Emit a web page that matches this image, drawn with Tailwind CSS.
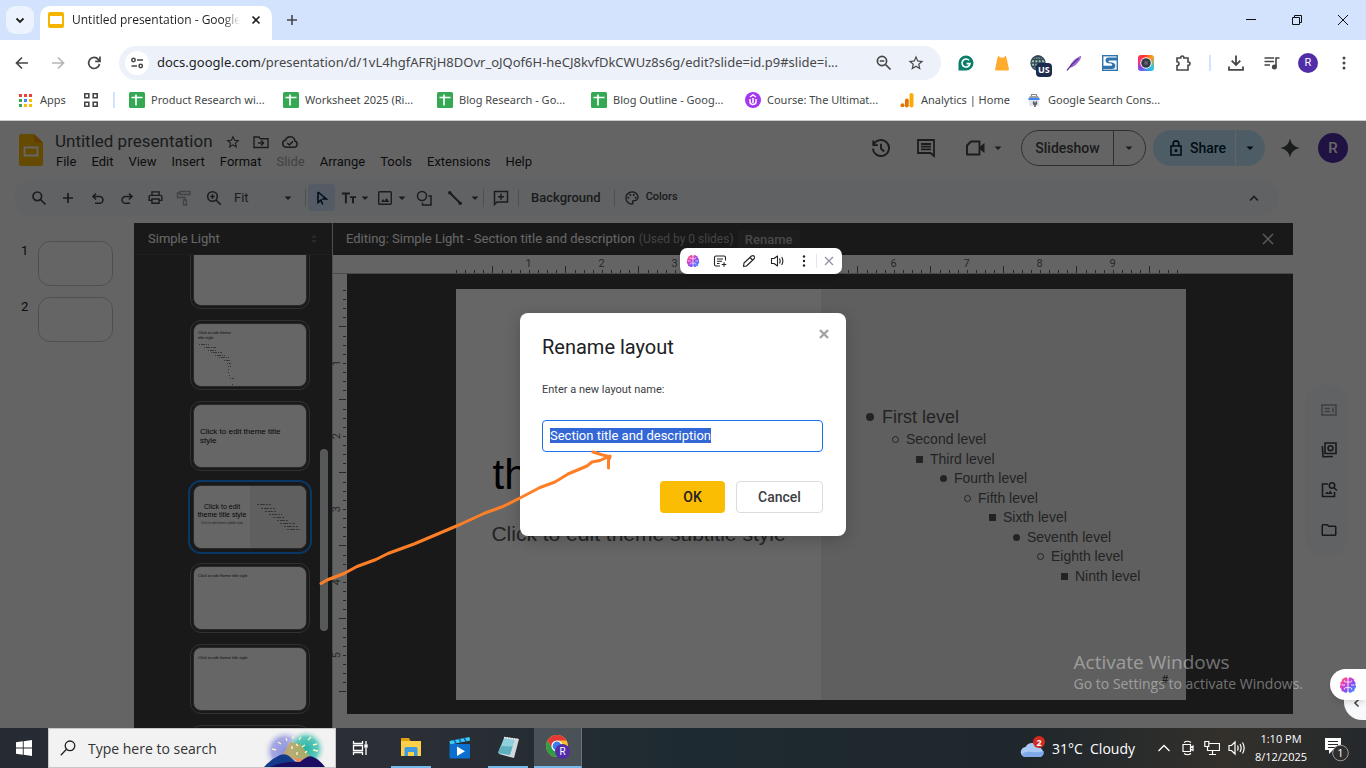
<!DOCTYPE html>
<html lang="en">
<head>
<meta charset="utf-8">
<title>Untitled presentation - Google Slides</title>
<script src="https://cdn.jsdelivr.net/npm/@tailwindcss/browser@4"></script>
</head>
<body class="flex h-screen flex-col overflow-hidden bg-white font-['Open_Sans',sans-serif] text-[#1f1f1f]">

<svg class="absolute size-0" aria-hidden="true">
  <defs>
    <linearGradient id="brainFill" x1="0" y1="0" x2="1" y2="1">
      <stop offset="0" stop-color="#ff7a45"/><stop offset=".3" stop-color="#e83fb8"/><stop offset=".6" stop-color="#8a4df5"/><stop offset="1" stop-color="#1fb0ff"/>
    </linearGradient>
    <symbol id="brain" viewBox="0 0 24 24">
      <path fill="url(#brainFill)" d="M11.4 3.2C10.6 1.4 7.8 1.2 6.8 3 4.600 3 3.300 5 3.900 6.700 1.800 7.700 1.300 10 2.300 11.600 .7 13.200 1 16 3 17c-.2 2.300 1.400 4 3.500 4 1 2 4.200 2 4.900-.2zM12.600 3.200c.8-1.800 3.600-2 4.600-.2 2.200 0 3.500 2 2.900 3.700 2.100 1 2.600 3.300 1.600 4.900 1.600 1.600 1.300 4.400-.7 5.400.2 2.300-1.400 4-3.500 4-1 2-4.200 2-4.900-.2z"/>
      <path fill="none" stroke="#fff" stroke-width="1.100" stroke-linecap="round" d="M11.400 8H8.500a1.500 1.500 0 0 1-1.500-2M11.400 15.500H9a2 2 0 0 0-2 2M4 12h3.500M12.600 8h2.900A1.500 1.500 0 0 0 17 6.500M12.600 15.500H15a2 2 0 0 1 2 2M20 12h-3.500"/>
    </symbol>
    <symbol id="sheet" viewBox="0 0 16 16">
      <rect width="16" height="16" rx="1.500" fill="#34a853"/><path d="M7 2.500v11M2.500 5.500h11" stroke="#fff" stroke-width="1.700"/>
    </symbol>
    <symbol id="caret" viewBox="0 0 10 10"><path fill="currentColor" d="M1.500 3.500h7L5 7z"/></symbol>
    <symbol id="star" viewBox="0 0 24 24"><path fill="currentColor" d="M22 9.240l-7.190-.62L12 2 9.190 8.630 2 9.240l5.460 4.730L5.820 21 12 17.270 18.180 21l-1.630-7.030L22 9.240zM12 15.400l-3.760 2.270 1-4.280-3.320-2.880 4.380-.38L12 6.100l1.710 4.040 4.380.38-3.320 2.880 1 4.280L12 15.400z"/></symbol>
    <pattern id="ticksX" width="73" height="8" patternUnits="userSpaceOnUse">
      <path stroke="#5f6368" d="M.5 5v3M9.500 5v3M18.500 5v3M27.500 5v3M36.500 1v7M46.500 5v3M55.500 5v3M64.500 5v3"/>
    </pattern>
    <pattern id="ticksY" width="8" height="73" patternUnits="userSpaceOnUse">
      <path stroke="#5f6368" d="M5 .5h3M5 9.500h3M5 18.500h3M5 27.500h3M1 36.500h7M5 46.500h3M5 55.500h3M5 64.500h3"/>
    </pattern>
  </defs>
</svg>

<!-- Tab strip -->
<header class="flex h-10 shrink-0 items-end bg-[#d3e3fd]">
  <button aria-label="Search tabs" class="mb-[6px] ml-[6px] flex size-7 items-center justify-center rounded-[9px] bg-[#edf3fe]">
    <svg class="size-4" viewBox="0 0 16 16" fill="none" stroke="#1f1f1f" stroke-width="1.800"><path d="M4.500 6.500 8 10l3.500-3.500"/></svg>
  </button>
  <div class="ml-[6px] flex h-[34px] w-[232px] items-center rounded-t-[10px] bg-white pr-2 pb-[6px] pl-2">
    <svg class="size-4" viewBox="0 0 16 16"><rect width="16" height="16" rx="2" fill="#f5b400"/><rect x="2" y="4" width="12" height="8" fill="#fff"/></svg>
    <span class="ml-2 w-[168px] overflow-hidden text-[12px] whitespace-nowrap [mask-image:linear-gradient(to_right,#000_90%,transparent)]">Untitled presentation - Google</span>
    <button aria-label="Close tab" class="ml-auto"><svg class="size-4" viewBox="0 0 16 16" stroke="#1f1f1f" stroke-width="1.600"><path d="m4.500 4.500 7 7m0-7-7 7"/></svg></button>
  </div>
  <button aria-label="New tab" class="mb-3 ml-3"><svg class="size-4" viewBox="0 0 16 16" stroke="#444746" stroke-width="1.600"><path d="M8 3v10M3 8h10"/></svg></button>
  <div class="mr-[14px] mb-3 ml-auto flex items-center gap-[30px]">
    <button aria-label="Minimize"><svg class="size-4" viewBox="0 0 16 16" stroke="#111"><path d="M3 7.500h10"/></svg></button>
    <button aria-label="Restore"><svg class="size-4" viewBox="0 0 16 16" fill="none" stroke="#111"><path d="M3.500 5.500h7v7h-7zM5.500 5.500v-2h7v7h-2"/></svg></button>
    <button aria-label="Close window" class="mr-px"><svg class="size-4" viewBox="0 0 16 16" stroke="#111"><path d="m3 3 10 10M13 3 3 13"/></svg></button>
  </div>
</header>

<!-- Address bar -->
<div class="flex h-[46px] shrink-0 items-center bg-white pr-3 pl-[13px] text-[#444746]">
  <button aria-label="Back" class="mr-[18px]"><svg class="size-[18px]" viewBox="0 0 18 18" fill="none" stroke="#444746" stroke-width="1.700"><path d="M15 9H4M9 3.500 3.500 9 9 14.500"/></svg></button>
  <button aria-label="Forward" class="mr-[18px]"><svg class="size-[18px]" viewBox="0 0 18 18" fill="none" stroke="#b4b6b8" stroke-width="1.700"><path d="M3 9h11M9 3.500 14.500 9 9 14.500"/></svg></button>
  <button aria-label="Reload"><svg class="size-[18px]" viewBox="0 0 18 18" fill="none" stroke="#444746" stroke-width="1.700"><path d="M14.500 10a5.500 5.500 0 1 1-1.200-4.600L15 7.200M15 2.500v4.800h-4.800"/></svg></button>
  <div class="ml-4 flex h-[34px] min-w-0 flex-1 items-center rounded-full bg-[#ecf1fa] pr-4 pl-[6px]">
    <button aria-label="Site information" class="flex size-6 shrink-0 items-center justify-center rounded-full bg-white">
      <svg class="size-4" viewBox="0 0 16 16" fill="none" stroke="#444746" stroke-width="1.500"><circle cx="4.500" cy="5" r="1.700"/><path d="M8 5h6M2.500 11H8"/><circle cx="11.700" cy="11" r="1.700"/></svg>
    </button>
    <a href="#" class="ml-2 overflow-hidden font-['Noto_Sans',sans-serif] text-[13px] whitespace-nowrap text-[#474747]"><span class="text-[#1f1f1f]">docs.google.com</span>/presentation/d/1vL4hgfAFRjH8DOvr_oJQof6H-heCJ8kvfDkCWUz8s6g/edit?slide=id.p9#slide=i...</a>
    <button aria-label="Zoom" class="mr-[14px] ml-auto"><svg class="size-[18px]" viewBox="0 0 18 18" fill="none" stroke="#444746" stroke-width="1.700"><circle cx="7" cy="7" r="4.600"/><path d="m10.500 10.500 5 5M4.800 7h4.400"/></svg></button>
    <button aria-label="Bookmark this tab"><svg class="size-[18px]"><use href="#star"/></svg></button>
  </div>
  <div class="ml-[17px] flex items-center gap-5">
    <button aria-label="Grammar extension"><svg class="size-4" viewBox="0 0 16 16"><path fill="#0b7d69" d="M8 .5A7.500 7.500 0 1 1 8 15.500H.5V8A7.500 7.500 0 0 1 8 .5z"/><path d="M11 5.300A4 4 0 1 0 12 8.600H8.600" fill="none" stroke="#fff" stroke-width="1.600"/></svg></button>
    <button aria-label="Notes extension"><svg class="size-4" viewBox="0 0 16 16"><path fill="#ffab2e" d="M4.200.5 6 2.500h4L11.800.5 13 5l2 9.500q0 1-1 1H2q-1 0-1-1L3 5z"/></svg></button>
    <button aria-label="Location extension, US" class="relative"><svg class="size-4" viewBox="0 0 16 16" fill="none" stroke="#33465a" stroke-width="1.300"><circle cx="8" cy="8" r="7" fill="#9cc7a8"/><path d="M1 8h14M2 4.500h12M2 11.500h12M8 1v14"/><ellipse cx="8" cy="8" rx="3.500" ry="7"/></svg><span class="absolute top-[8px] left-[6px] rounded-[4px] bg-[#1d2c4c] px-[2px] text-[9px] leading-[14px] font-bold text-white">US</span></button>
    <button aria-label="Feather extension"><svg class="size-4" viewBox="0 0 16 16"><path fill="#9b6fd0" d="M15 .8c.6 3-2.700 7-6 9.700-2 1.700-4.200 2-5.500 2.200C4.500 8 9 3 15 .8z"/><path stroke="#5b2a9a" stroke-width="1.100" fill="none" d="M12.500 3.500Q6 8.500 1 15.300"/></svg></button>
    <button aria-label="SEO extension"><svg class="size-4" viewBox="0 0 16 16"><rect x=".7" y=".7" width="14.600" height="14.600" fill="#fff" stroke="#2f74ad" stroke-width="1.400"/><path fill="#2f74ad" d="M15 2.500H6.500C2.500 2.500 2.500 8 6.500 8.300l2.500.3c1.800.2 1.800 2.200-.2 2.200H1V14h9.200c4.300-.2 4.300-6 0-6.500L7.500 7.200C6.200 7 6.200 5.400 7.500 5.400H15z"/></svg></button>
    <button aria-label="Color picker extension" class="flex size-4 items-center justify-center rounded-[3px] bg-[conic-gradient(from_45deg,#ff9a1f,#22c7ee_25%,#7b4df0_50%,#ff2d8e_65%,#ff3a24_85%,#ff9a1f)]"><svg class="size-3" viewBox="0 0 12 12"><circle cx="6" cy="6" r="5.700" fill="#fff"/><circle cx="6" cy="6" r="4.800" fill="#343a46"/><circle cx="6" cy="6" r="2" fill="#5c6470"/></svg></button>
    <button aria-label="Extensions"><svg class="size-[18px]" viewBox="0 0 18 18" fill="none" stroke="#444746" stroke-width="1.600"><path d="M3 4h3.700q0-2 1.600-2t1.600 2H14v4q2 0 2 1.600T14 11.200V16H3v-4.200q2-.2 2-2t-2-2z"/></svg></button>
  </div>
  <span class="mx-[17px] h-4 w-[2px] bg-[#d3e3fd]"></span>
  <button aria-label="Downloads" class="mr-5"><svg class="size-4" viewBox="0 0 16 16" fill="none" stroke="#444746" stroke-width="1.800"><path d="M8 .5v9M3.700 5.700 8 10l4.300-4.300M1 11.500v3.400h14v-3.400"/></svg></button>
  <button aria-label="Media controls" class="mr-[18px]"><svg class="size-4" viewBox="0 0 16 16" fill="none" stroke="#444746" stroke-width="1.600"><path d="M.5 3H10M.5 6.500H10M.5 10H6M12 12V3h3.500"/><circle cx="10.400" cy="12" r="1.700" fill="#444746"/></svg></button>
  <button aria-label="Profile" class="mr-4 flex size-5 items-center justify-center rounded-full bg-[#512da8] font-['Roboto',sans-serif] text-[11px] text-white">R</button>
  <button aria-label="Menu" class="flex w-5 justify-center"><svg class="h-4 w-1" viewBox="0 0 4 16" fill="#444746"><circle cx="2" cy="3" r="1.500"/><circle cx="2" cy="8" r="1.500"/><circle cx="2" cy="13" r="1.500"/></svg></button>
</div>

<!-- Bookmarks -->
<nav class="flex h-[35px] shrink-0 items-center border-b border-[#c9ccd0] bg-white pb-[6px] pl-[19px] font-['Noto_Sans',sans-serif] text-[11px] whitespace-nowrap text-[#444746]">
  <a href="#" class="flex w-[65px] items-center gap-2"><svg class="size-[13px]" viewBox="0 0 13 13"><path fill="#ea4335" d="M0 0h3v3H0zM5 0h3v3H5zM10 0h3v3h-3z"/><path fill="#34a853" d="M0 5h3v3H0zM0 10h3v3H0z"/><path fill="#4285f4" d="M5 5h3v3H5z"/><path fill="#fbbc04" d="M10 5h3v3h-3zM5 10h3v3H5zM10 10h3v3h-3z"/></svg>Apps</a>
  <a href="#" aria-label="Tab groups"><svg class="size-[14px]" viewBox="0 0 14 14" fill="none" stroke="#444746" stroke-width="1.600"><path d="M.8.8h4v4h-4zM9.200.8h4v4h-4zM.8 9.200h4v4h-4zM9.200 9.200h4v4h-4z"/></svg></a>
  <span class="mr-[14px] ml-[15px] h-4 w-[2px] bg-[#d3e3fd]"></span>
  <a href="#" class="flex w-[154px] items-center gap-[6px]"><svg class="size-4"><use href="#sheet"/></svg>Product Research wi...</a>
  <a href="#" class="flex w-[154px] items-center gap-[6px]"><svg class="size-4"><use href="#sheet"/></svg>Worksheet 2025 (Ri...</a>
  <a href="#" class="flex w-[154px] items-center gap-[6px]"><svg class="size-4"><use href="#sheet"/></svg>Blog Research - Go...</a>
  <a href="#" class="flex w-[154px] items-center gap-[6px]"><svg class="size-4"><use href="#sheet"/></svg>Blog Outline - Goog...</a>
  <a href="#" class="flex w-[154px] items-center gap-[6px]"><svg class="size-4" viewBox="0 0 16 16"><circle cx="8" cy="8" r="8" fill="#a435f0"/><path d="M5 7v2.500a3 3 0 0 0 6 0V7M8 11V6M5 5l3-2 3 2" fill="none" stroke="#fff" stroke-width="1.500"/></svg>Course: The Ultimat...</a>
  <a href="#" class="flex w-[127px] items-center gap-[6px]"><svg class="size-4" viewBox="0 0 16 16"><circle cx="3.500" cy="13.300" r="2" fill="#e37400"/><rect x="6" y="6.500" width="3.700" height="9" rx="1.800" fill="#e37400"/><rect x="10.500" y="1" width="4" height="14.500" rx="2" fill="#fbab04"/></svg>Analytics | Home</a>
  <a href="#" class="flex items-center gap-[6px]"><svg class="size-4" viewBox="0 0 16 16"><path d="M5.500 4V2.500h5V4" fill="none" stroke="#888" stroke-width="1.200"/><path fill="#9aa0a6" d="M4 4h8l1.500 2.500h-11z"/><path fill="#4285f4" d="M2.500 6h11v2.200h-11z"/><path fill="#e3e6ea" d="M3 8.200h10V14H3z"/><circle cx="9" cy="11" r="2.300" fill="#5f6368"/><path fill="#e3e6ea" d="M8.300 8h1.400v2.500H8.300z"/><path stroke="#5f6368" stroke-width="1.600" d="M9 11.500V15"/></svg>Google Search Cons...</a>
</nav>

<!-- Slides application -->
<main class="relative flex min-h-0 flex-1 flex-col bg-[#f9fbfd] font-['Roboto',sans-serif]">
  <div class="flex h-[58px] shrink-0 items-start pr-[18px] pl-[19px]">
    <svg class="mt-[13px] h-8 w-6" viewBox="0 0 24 32"><path fill="#fbbc04" d="M2.500 0H15l9 8.500v21q0 2.500-2.500 2.500h-19Q0 32 0 29.500v-27Q0 0 2.500 0z"/><path fill="#f29900" d="M15 0l9 8.500h-9z"/><path fill="none" stroke="#fff" stroke-width="1.800" d="M5.500 13.500h13v8h-13z"/></svg>
    <div class="mt-[9px] ml-3">
      <div class="flex h-6 items-center text-[#444746]">
        <h1 class="text-[17px]">Untitled presentation</h1>
        <button aria-label="Star" class="ml-3"><svg class="size-4"><use href="#star"/></svg></button>
        <button aria-label="Move" class="ml-3"><svg class="size-4" viewBox="0 0 16 16" fill="none" stroke="#444746" stroke-width="1.400"><path d="M1 3h5l1.500 1.700H15V13.500H1zM5 9h5M8.200 6.600 10.600 9l-2.400 2.400"/></svg></button>
        <button aria-label="Saved to Drive" class="ml-3"><svg class="size-[18px]" viewBox="0 0 18 18" fill="none" stroke="#444746" stroke-width="1.500"><path d="M5 14.200a3.600 3.600 0 0 1-.4-7.100 4.800 4.800 0 0 1 9.300.9 3.200 3.200 0 0 1-.3 6.200zM6.300 10l2 2 3.600-3.600"/></svg></button>
      </div>
      <nav class="ml-px flex h-4 items-center gap-[15px] text-[13px]">
        <button>File</button><button>Edit</button><button>View</button><button>Insert</button><button>Format</button><button disabled class="text-[#a0a2a4]">Slide</button><button>Arrange</button><button>Tools</button><button>Extensions</button><button>Help</button>
      </nav>
    </div>
    <div class="mt-[9px] ml-auto flex h-9 items-center text-[14px] font-medium text-[#444746]">
      <button aria-label="Version history" class="mr-[25px]"><svg class="size-5" viewBox="0 0 20 20" fill="none" stroke="#444746" stroke-width="1.900"><path d="M2.800 6.500A8 8 0 1 1 2 10.500M2.300 2.500v4.600h4.600M10 5.800V10.500l3.300 3"/></svg></button>
      <button aria-label="Comments" class="mr-[29px]"><svg class="size-5" viewBox="0 0 20 20" fill="none" stroke="#444746" stroke-width="1.800"><path d="M2 2h16v16l-3.500-3H2zM5 6h10M5 8.700h10M5 11.400h10"/></svg></button>
      <button aria-label="Join a call" class="mr-[18px] flex items-center gap-2"><svg class="size-5" viewBox="0 0 20 20"><path fill="none" stroke="#444746" stroke-width="1.900" d="M6 3.500h8.500v13H2v-9z" stroke-linejoin="round"/><path fill="#444746" d="M14.500 9 19.500 5v10l-5-4z"/></svg><svg class="size-[10px]"><use href="#caret"/></svg></button>
      <div class="mr-[7px] flex h-9 w-[125px] rounded-full border border-[#747775]">
        <button class="flex-1">Slideshow</button>
        <button aria-label="Slideshow options" class="flex w-8 items-center justify-center border-l border-[#747775] pr-[2px]"><svg class="size-[10px]"><use href="#caret"/></svg></button>
      </div>
      <div class="mr-[15px] flex h-9 w-[112px] rounded-full bg-[#c2e7ff] text-[#001d35]">
        <button class="flex flex-1 items-center justify-center gap-2 pl-2"><svg class="h-4 w-3" viewBox="0 0 12 16" fill="none" stroke="#001d35" stroke-width="1.600"><path d="M1 6h10v9H1zM3.200 6V3.700a2.800 2.800 0 0 1 5.600 0V6"/><circle cx="6" cy="10.500" r=".8"/></svg>Share</button>
        <button aria-label="Share options" class="flex w-[30px] items-center justify-center border-l border-[#f9fbfd] pr-[2px]"><svg class="size-[10px]"><use href="#caret"/></svg></button>
      </div>
      <button aria-label="Ask Gemini" class="mr-[18px]"><svg class="size-5" viewBox="0 0 20 20"><path fill="#444746" d="M10 .5Q11.500 8.500 19.500 10 11.500 11.500 10 19.500 8.500 11.500 .5 10 8.500 8.500 10 .5z"/></svg></button>
      <button aria-label="Account" class="flex size-[30px] items-center justify-center rounded-full bg-[#512da8] text-[15px] text-white">R</button>
    </div>
  </div>

  <div class="mr-[87px] ml-[14px] flex h-[37px] shrink-0 items-center rounded-full bg-[#f0f4f9] pl-[10px] text-[13px] text-[#444746]">
    <button aria-label="Search menus" class="flex w-[29px] justify-center"><svg class="size-4" viewBox="0 0 16 16" fill="none" stroke="#444746" stroke-width="1.700"><circle cx="6.300" cy="6.300" r="4.300"/><path d="m9.500 9.500 5 5"/></svg></button>
    <button aria-label="New slide" class="flex w-[30px] justify-center"><svg class="size-4" viewBox="0 0 16 16" stroke="#444746" stroke-width="1.700"><path d="M8 3v10M3 8h10"/></svg></button>
    <button aria-label="Undo" class="flex w-[30px] justify-center"><svg class="size-4" viewBox="0 0 16 16" fill="none" stroke="#444746" stroke-width="1.600"><path d="M6 3.500 3 6.500l3 3M3 6.500h6.500a3.400 3.400 0 0 1 0 6.800H5"/></svg></button>
    <button aria-label="Redo" class="flex w-[28px] justify-center"><svg class="size-4" viewBox="0 0 16 16" fill="none" stroke="#444746" stroke-width="1.600"><path d="m10 3.500 3 3-3 3M13 6.500H6.500a3.400 3.400 0 0 0 0 6.800H11"/></svg></button>
    <button aria-label="Print" class="flex w-[29px] justify-center"><svg class="size-[17px]" viewBox="0 0 24 24" fill="#444746"><path d="M19 8h-1V3H6v5H5c-1.660 0-3 1.340-3 3v6h4v4h12v-4h4v-6c0-1.660-1.340-3-3-3zM8 5h8v3H8V5zm8 12v2H8v-4h8v2zm2-2v-2H6v2H4v-4c0-.55.45-1 1-1h14c.55 0 1 .45 1 1v4h-2z"/></svg></button>
    <button aria-label="Paint format" disabled class="flex w-[28px] justify-center"><svg class="size-4" viewBox="0 0 16 16" fill="none" stroke="#a6a8aa" stroke-width="1.400"><path d="M4 1.500h10v3H4zM4 3H1.500v4.500H9V10M7.500 10h3v5h-3z"/></svg></button>
    <button aria-label="Zoom in" class="flex w-[31px] justify-center"><svg class="size-4" viewBox="0 0 16 16" fill="none" stroke="#444746" stroke-width="1.600"><circle cx="6.500" cy="6.500" r="4.800"/><path d="m10 10 4.800 4.800M6.500 4.300v4.400M4.300 6.500h4.400"/></svg></button>
    <button class="flex w-[64px] items-center justify-between pl-[5px]">Fit<svg class="size-[10px]"><use href="#caret"/></svg></button>
    <span class="mr-[2px] ml-3 h-[18px] w-px bg-[#c7c7c7]"></span>
    <button aria-label="Select" class="flex size-[27px] items-center justify-center rounded-[4px] bg-[#d3e3fd]"><svg class="size-4" viewBox="0 0 16 16" fill="none" stroke="#041e49" stroke-width="1.600"><path d="M4 2v10.500l2.800-2.400 2 4.400M4 2l8.300 7H8"/></svg></button>
    <button aria-label="Text box" class="flex w-[35px] items-center justify-end gap-[3px]"><svg class="h-4 w-[16px]" viewBox="0 0 18 16" fill="none" stroke="#444746" stroke-width="2.200"><path d="M1 3h9M5.500 3v11M10 7h7M13.500 7v7"/></svg><svg class="size-[10px]"><use href="#caret"/></svg></button>
    <button aria-label="Image" class="flex w-[37px] items-center justify-end gap-1"><svg class="size-4" viewBox="0 0 16 16"><rect x="1.700" y="1.700" width="12.600" height="12.600" rx="1" fill="none" stroke="#444746" stroke-width="1.400"/><path fill="#444746" d="m4 12 2-3 1.600 2L9.500 8l2.800 4z"/></svg><svg class="size-[10px]"><use href="#caret"/></svg></button>
    <button aria-label="Shape" class="flex w-[34px] justify-center"><svg class="size-4" viewBox="0 0 16 16" fill="none" stroke="#444746" stroke-width="1.500"><circle cx="6" cy="6" r="4.500"/><path d="M12.500 6H15v9H6.500v-2.500"/></svg></button>
    <button aria-label="Line" class="flex w-[39px] items-center justify-end gap-[7px]"><svg class="size-4" viewBox="0 0 16 16"><path stroke="#444746" stroke-width="2" d="m2.500 2.500 11 11"/><circle cx="2.800" cy="2.800" r="1.800" fill="#444746"/><circle cx="13.200" cy="13.200" r="1.800" fill="#444746"/></svg><svg class="size-[10px]"><use href="#caret"/></svg></button>
    <span class="mr-1 ml-[3px] h-[18px] w-px bg-[#c7c7c7]"></span>
    <button aria-label="Comment" class="flex w-[26px] justify-center"><svg class="size-4" viewBox="0 0 16 16" fill="none" stroke="#444746" stroke-width="1.500"><path d="M1.500 14.500v-13h13v10.500H4zM8 3.700v6M5 6.700h6"/></svg></button>
    <span class="mr-3 ml-1 h-[18px] w-px bg-[#c7c7c7]"></span>
    <button class="mr-[13px] font-medium">Background</button>
    <span class="mr-[9px] h-[18px] w-px bg-[#c7c7c7]"></span>
    <button class="flex items-center gap-[6px] text-[11px] font-medium"><svg class="size-4" viewBox="0 0 24 24" fill="#444746"><path d="M12 22C6.490 22 2 17.510 2 12S6.490 2 12 2s10 4.040 10 9c0 3.310-2.690 6-6 6h-1.770c-.28 0-.5.22-.5.5 0 .12.05.23.13.33.41.47.64 1.060.64 1.670A2.500 2.500 0 0 1 12 22zm0-18c-4.410 0-8 3.590-8 8s3.590 8 8 8c.28 0 .5-.22.5-.5a.54.54 0 0 0-.14-.35c-.41-.46-.63-1.050-.63-1.650a2.500 2.500 0 0 1 2.500-2.500H16c2.210 0 4-1.790 4-4 0-3.860-3.590-7-8-7z"/><circle cx="6.500" cy="11.500" r="1.500"/><circle cx="9.500" cy="7.500" r="1.500"/><circle cx="14.500" cy="7.500" r="1.500"/><circle cx="17.500" cy="11.500" r="1.500"/></svg>Colors</button>
    <button aria-label="Hide menus" class="mr-[17px] ml-auto"><svg class="size-4" viewBox="0 0 16 16" fill="none" stroke="#444746" stroke-width="1.700"><path d="M4 10.500 8 6.500l4 4"/></svg></button>
  </div>

  <div class="mt-[7px] flex min-h-0 flex-1">
    <!-- Filmstrip -->
    <aside class="flex w-[134px] shrink-0 flex-col gap-[11px] pt-[18px] pl-[21px] text-[13px] text-[#222]">
      <div class="flex h-[45px] justify-between pr-[21px]"><span>1</span><span class="w-[75px] rounded-[12px] border border-[#c4c7c5] bg-white/50"></span></div>
      <div class="flex h-[45px] justify-between pr-[21px]"><span>2</span><span class="w-[75px] rounded-[12px] border border-[#c4c7c5] bg-white/50"></span></div>
    </aside>

    <!-- Theme layouts -->
    <section class="flex w-[199px] shrink-0 flex-col overflow-hidden border-r border-[#c4c7c5] bg-[#3f3f3f]">
      <div class="flex h-8 shrink-0 items-center justify-between border-b border-[#4d4d4d] pr-[13px] pl-[14px] text-[13px] text-white">Simple Light
        <svg class="size-[10px]" viewBox="0 0 10 10" fill="#666"><path d="M2 4h6L5 .5zM2 6h6L5 9.500z"/></svg>
      </div>
      <div class="relative flex min-h-0 flex-1 flex-col overflow-hidden pl-[56px]">
        <div class="-mt-4 flex flex-col gap-[11px] font-['Liberation_Sans',sans-serif] text-[#222]">
          <div class="h-[70px] w-[120px] shrink-0 rounded-[11px] border border-[#7c7c7c] p-[2px]"><div class="h-full rounded-[8px] border border-[#666] bg-white"></div></div>
          <div class="h-[70px] w-[120px] shrink-0 rounded-[11px] border border-[#7c7c7c] p-[2px]"><div class="h-full overflow-hidden rounded-[8px] border border-[#666] bg-white pt-[6px] pl-[4px] text-[4px] leading-[5px]">Click to edit theme<br>title style
            <svg class="mt-px h-[46px] w-14" viewBox="0 0 56 46" stroke="#888" stroke-width="1" stroke-dasharray="1 1 4 1"><path d="M1 3.500h10M6 6.500h12M10 9.500h9M13 11.500h11M17 14.500h10M21 16.500h10M26 19.500h6M29 22.500h4M30 25.500h3M30 28.500h2M30 31.500h2M31 34.500h2M32 37.500h4M34 43.500h2"/></svg></div></div>
          <div class="h-[70px] w-[120px] shrink-0 rounded-[11px] border border-[#7c7c7c] p-[2px]"><div class="flex h-full items-center rounded-[8px] border border-[#666] bg-white pl-[6px] text-[8px] leading-[9px] text-[#111]">Click to edit theme title<br>style</div></div>
          <div class="h-[70px] w-[120px] shrink-0 rounded-[11px] p-[3px] outline-2 outline-[#1a8cff]"><div class="flex h-full overflow-hidden rounded-[8px] border border-[#666] bg-white">
            <div class="flex w-1/2 flex-col items-center pt-[17px] text-center text-[7px] leading-[8px] whitespace-nowrap text-[#111]"><span>Click to edit</span><span>theme title style</span><span class="text-[3px] text-[#555]">Click to edit theme subtitle style</span></div>
            <div class="w-1/2 bg-[#eee]"><svg class="h-full w-full" viewBox="0 0 56 62" stroke="#888" stroke-width="1" stroke-dasharray="2 1 5 1"><path d="M7 18.500h14M11 22.500h14M15 25.500h12M19 28.500h13M23 31.500h11M27 34.500h12M30 37.500h15M34 40.500h14M37 43.500h13"/></svg></div>
          </div></div>
          <div class="h-[70px] w-[120px] shrink-0 rounded-[11px] border border-[#7c7c7c] p-[2px]"><div class="h-full rounded-[8px] border border-[#666] bg-white pt-[6px] pl-[4px] text-[4px] leading-[5px]">Click to edit theme title style</div></div>
          <div class="h-[70px] w-[120px] shrink-0 rounded-[11px] border border-[#7c7c7c] p-[2px]"><div class="h-full rounded-[8px] border border-[#666] bg-white pt-[7px] pl-[4px] text-[4px] leading-[5px]">Click to edit theme title style</div></div>
          <div class="h-[70px] w-[120px] shrink-0 rounded-[11px] border border-[#7c7c7c] p-[2px]"></div>
        </div>
        <span class="absolute top-[194px] right-1 h-[182px] w-2 rounded-full bg-[#dadce0]"></span>
      </div>
    </section>

    <!-- Layout editor -->
    <section class="flex min-w-0 flex-1 flex-col">
      <div class="flex h-8 shrink-0 items-center bg-[#3f3f3f] pr-[18px] pl-[13px] text-[13px] whitespace-nowrap">
        <h2 class="text-white">Editing: Simple Light - Section title and description</h2>
        <span class="ml-1 text-[12px] text-[#a8a8a8]">(Used by 0 slides)</span>
        <button class="ml-1 h-[18px] w-[62px] bg-[#4a4a4a] font-medium text-[#b5b5b5]">Rename</button>
        <button aria-label="Close editor" class="ml-auto"><svg class="size-[14px]" viewBox="0 0 14 14" stroke="#e8e8e8" stroke-width="1.400"><path d="m2 2 10 10M12 2 2 12"/></svg></button>
      </div>
      <div class="h-[19px] shrink-0 border-b border-[#b8babc] pl-[123px] text-[11px] text-[#5f6368]">
        <div class="flex h-[10px] w-[730px] pl-[36px] leading-[17px]"><span class="w-[73px] text-center">1</span><span class="w-[73px] text-center">2</span><span class="w-[73px] text-center">3</span><span class="w-[73px] text-center">4</span><span class="w-[73px] text-center">5</span><span class="w-[73px] text-center">6</span><span class="w-[73px] text-center">7</span><span class="w-[73px] text-center">8</span><span class="w-[73px] text-center">9</span></div>
        <svg class="block h-2 w-[722px]"><rect width="722" height="8" fill="url(#ticksX)"/></svg>
      </div>
      <div class="flex min-h-0 flex-1 pb-[14px]">
        <div class="flex w-[14px] shrink-0 pt-4">
          <div class="flex w-[9px] shrink-0 flex-col pt-[37px] text-[11px] text-[#5f6368]"><span class="flex h-[73px] items-center justify-center"><span class="-rotate-90">1</span></span><span class="flex h-[73px] items-center justify-center"><span class="-rotate-90">2</span></span><span class="flex h-[73px] items-center justify-center"><span class="-rotate-90">3</span></span><span class="flex h-[73px] items-center justify-center"><span class="-rotate-90">4</span></span><span class="flex h-[73px] items-center justify-center"><span class="-rotate-90">5</span></span></div>
          <svg class="-ml-1 h-[402px] w-2 shrink-0"><rect width="8" height="402" fill="url(#ticksY)"/></svg>
        </div>
        <div class="flex min-w-0 flex-1 bg-[#3f3f3f] pt-[15px] pb-[14px] pl-[109px]">
          <div class="flex w-[730px] bg-white font-['Liberation_Sans',sans-serif]">
            <div class="w-[365px] pt-[114px] text-center whitespace-nowrap">
              <p class="text-[42px] leading-[48px] text-black">Click to edit<br>theme title style</p>
              <p class="pt-[21px] text-[21px] leading-7 text-[#595959]">Click to edit theme subtitle style</p>
            </div>
            <div class="flex w-[365px] flex-col bg-[#eee] pt-[116px] text-[14px] text-[#595959]">
              <div class="flex h-6 items-center pl-[45px] text-[18px]"><i class="mr-2 size-2 rounded-full bg-[#595959]"></i>First level</div>
              <div class="flex h-[157px] flex-col justify-between pt-px">
                <div class="flex h-[19px] items-center pl-[71px]"><i class="mr-[7px] size-[7px] rounded-full border border-[#595959]"></i>Second level</div>
                <div class="flex h-[19px] items-center pl-[95px]"><i class="mr-[7px] size-[7px] bg-[#595959]"></i>Third level</div>
                <div class="flex h-[19px] items-center pl-[119px]"><i class="mr-[7px] size-[7px] rounded-full bg-[#595959]"></i>Fourth level</div>
                <div class="flex h-[19px] items-center pl-[143px]"><i class="mr-[7px] size-[7px] rounded-full border border-[#595959]"></i>Fifth level</div>
                <div class="flex h-[19px] items-center pl-[168px]"><i class="mr-[7px] size-[7px] bg-[#595959]"></i>Sixth level</div>
                <div class="flex h-[19px] items-center pl-[192px]"><i class="mr-[7px] size-[7px] rounded-full bg-[#595959]"></i>Seventh level</div>
                <div class="flex h-[19px] items-center pl-[216px]"><i class="mr-[7px] size-[7px] rounded-full border border-[#595959]"></i>Eighth level</div>
                <div class="flex h-[19px] items-center pl-[240px]"><i class="mr-[7px] size-[7px] bg-[#595959]"></i>Ninth level</div>
              </div>
              <div class="mt-auto pr-[18px] pb-[13px] text-right text-[11px] leading-4 text-black">#</div>
            </div>
          </div>
        </div>
      </div>
    </section>

    <!-- Side tools -->
    <aside class="w-[73px] shrink-0 pt-[162px] pl-3">
      <div class="flex h-[171px] w-[43px] flex-col items-center gap-[22px] rounded-[18px] bg-[#f0f4f9] pt-[16px] pl-1">
        <button aria-label="Templates" disabled><svg class="size-[18px]" viewBox="0 0 18 18" fill="none" stroke="#9a9c9e" stroke-width="1.500"><path d="M2 4h14v10H2zM4.500 7.500H10M4.500 10.500H10M13 6.500v5"/></svg></button>
        <button aria-label="Building blocks"><svg class="size-[18px]" viewBox="0 0 18 18" fill="none" stroke="#3c4043" stroke-width="1.600"><path d="M5 2h11v10.500H5zM2.300 5l.8 10.800L13 15.500"/><circle cx="10.500" cy="7.200" r="2.400"/></svg></button>
        <button aria-label="Image search"><svg class="size-[18px]" viewBox="0 0 18 18" fill="none" stroke="#3c4043" stroke-width="1.600"><path d="M8 3H2.500v12.500h12V11M13.800 6.500 17 9.500"/><circle cx="12" cy="4.500" r="2.700"/><path d="m5 13 2-2.500 1.500 1.500 1.700-2.500 2.300 3.500z" fill="#3c4043" stroke="none"/></svg></button>
        <button aria-label="Drive files"><svg class="size-[18px]" viewBox="0 0 24 24" fill="#3c4043"><path d="M9.170 6l2 2H20v10H4V6h5.170M10 4H4c-1.100 0-1.990.9-1.990 2L2 18c0 1.100.9 2 2 2h16c1.100 0 2-.9 2-2V8c0-1.100-.9-2-2-2h-8l-2-2z"/></svg></button>
      </div>
    </aside>
  </div>

  <!-- Modal backdrop -->
  <div class="absolute inset-0 bg-black/60"></div>

  <!-- Activation notice -->
  <div class="absolute right-[63px] bottom-[34px] font-['Open_Sans',sans-serif] whitespace-nowrap text-white/40">
    <p class="text-[19px] leading-6">Activate Windows</p>
    <p class="text-[14px] leading-5">Go to Settings to activate Windows.</p>
  </div>

  <!-- Rename dialog -->
  <div role="dialog" aria-labelledby="dlg-title" class="absolute top-[192px] left-[520px] flex w-[326px] flex-col rounded-[8px] bg-white px-[22px] pt-[22px] pb-[23px] shadow-[0_4px_16px_rgba(0,0,0,0.2)]">
    <button aria-label="Close dialog" class="absolute top-[14px] right-[15px]"><svg class="size-[14px]" viewBox="0 0 14 14" stroke="#a3a3a3" stroke-width="2.400"><path d="m3 3 8 8M11 3l-8 8"/></svg></button>
    <h2 id="dlg-title" class="text-[20px] leading-6 text-[#202124]">Rename layout</h2>
    <label for="layout-name" class="mt-[23px] text-[11px] leading-4 text-[#3c4043]">Enter a new layout name:</label>
    <input id="layout-name" type="text" value="Section title and description" autofocus class="mt-[22px] h-8 w-[281px] rounded-[4px] border border-[#1a73e8] px-[7px] pb-px text-[13px] text-[#202124] outline-none selection:bg-[#3367d6] selection:text-white">
    <div class="mt-[29px] flex justify-end gap-[11px] pr-px text-[14px] font-medium">
      <button class="h-8 w-[65px] rounded-[4px] bg-[#fbbc04] text-[#202124]">OK</button>
      <button class="h-8 w-[87px] rounded-[4px] border border-[#dadce0] text-[#3c4043]">Cancel</button>
    </div>
  </div>

  <!-- Selection popup -->
  <div class="absolute top-[127px] left-[680px] flex h-[26px] w-[162px] items-center rounded-[7px] bg-white px-[6px] shadow-md">
    <button aria-label="Assistant"><svg class="size-[14px]"><use href="#brain"/></svg></button>
    <button aria-label="Summarize" class="ml-[13px]"><svg class="size-[14px]" viewBox="0 0 14 14" fill="none" stroke="#222" stroke-width="1.100"><path d="M12.500 6.500V3.500q0-1.500-1.500-1.500H3Q1.500 2 1.500 3.500v7Q1.500 12 3 12h4M4 5h6M4 7.300h5M4 9.500h2.500M11 8.200v4.600M8.700 10.500h4.600"/></svg></button>
    <button aria-label="Rewrite" class="ml-[15px]"><svg class="size-[14px]" viewBox="0 0 14 14" fill="none" stroke="#222" stroke-width="1.100" stroke-linejoin="round"><path d="m2 9 7.500-7q2-1 2.800.5t-.5 2.500L4.500 12l-3 .5zM8 3.500l2.500 2.500"/></svg></button>
    <button aria-label="Read aloud" class="ml-[14px]"><svg class="size-[14px]" viewBox="0 0 14 14" fill="none" stroke="#222" stroke-width="1.100" stroke-linejoin="round"><path d="M1.500 4.500H4L7.500 2v10L4 9.500H1.500zM9.500 4.500q1.300 2.500 0 5M11.700 3q2.300 4 0 8"/></svg></button>
    <button aria-label="More" class="ml-[18px]"><svg class="h-[14px] w-1" viewBox="0 0 4 14" fill="#222"><circle cx="2" cy="2.500" r="1.200"/><circle cx="2" cy="7" r="1.200"/><circle cx="2" cy="11.500" r="1.200"/></svg></button>
    <span class="ml-[10px] h-[14px] w-px bg-[#e6e6ee]"></span>
    <button aria-label="Dismiss" class="ml-[6px]"><svg class="size-[12px]" viewBox="0 0 12 12" stroke="#8f8fa5" stroke-width="1.200"><path d="m2 2 8 8M10 2l-8 8"/></svg></button>
  </div>

  <!-- Edge widgets -->
  <button aria-label="Expand side panel" class="absolute right-0 bottom-[8px] flex h-8 w-[22px] items-end justify-center rounded-bl-[18px] bg-[#f8f9fa] pb-[11px] pl-1"><svg class="size-3" viewBox="0 0 12 12" fill="none" stroke="#444746" stroke-width="1.600"><path d="M7.500 2.500 4 6l3.500 3.500"/></svg></button>
  <button aria-label="Open assistant" class="absolute right-0 bottom-[28px] flex h-[31px] w-9 items-center rounded-l-full bg-white pl-[9px] shadow-md"><svg class="size-[18px]"><use href="#brain"/></svg></button>

  <!-- Hand-drawn arrow -->
  <svg class="pointer-events-none absolute top-[322px] left-[310px] h-[150px] w-[310px]" viewBox="310 443 310 150" fill="none" stroke="#ff7f27" stroke-width="3" stroke-linecap="round" stroke-linejoin="round"><path d="M321 583.500 327 580 344 573.500 357 566.500 376 559.500 388 553.500 414 544 440 533 460 524.500 485 513 503 506.500 520 498 540 487.500 555 482 568 474 587 466 592 462 600 460.500 610 456M593 452 601 454.500 610 457 608.500 460V468"/></svg>
</main>

<!-- Taskbar -->
<footer class="flex h-10 shrink-0 items-center bg-[linear-gradient(90deg,#262a33,#2b2f35_30%,#1e2a31_50%,#1f272c_75%,#33302b_90%,#25292c)] font-['Open_Sans',sans-serif] text-white">
  <button aria-label="Start" class="flex h-full w-12 items-center justify-center"><svg class="size-4" viewBox="0 0 16 16" fill="#fff"><path d="m0 2.300 6.800-1v6.300H0zM7.700 1.200 16 0v7.600H7.700zM0 8.500h6.800v6.300L0 13.800zM7.700 8.500H16V16l-8.300-1.200z"/></svg></button>
  <label class="flex h-full w-72 items-center border border-[#c8c8c8] bg-[#f2f2f2] pl-[11px]">
    <svg class="size-4 shrink-0" viewBox="0 0 16 16" fill="none" stroke="#222" stroke-width="1.300"><circle cx="10" cy="5.800" r="4.800"/><path d="M6.500 9.300.8 15.200"/></svg>
    <input type="text" aria-label="Search" placeholder="Type here to search" class="ml-3 w-[176px] bg-transparent text-[14px] outline-none placeholder:text-[#333]">
    <svg class="h-[38px] w-[66px] shrink-0" viewBox="0 0 66 38">
      <defs><radialGradient id="glowL"><stop offset="0" stop-color="#8f93dd"/><stop offset=".6" stop-color="#a5a8e2"/><stop offset="1" stop-color="#f2f2f2" stop-opacity="0"/></radialGradient><radialGradient id="glowR"><stop offset="0" stop-color="#22b3a2"/><stop offset=".6" stop-color="#5fc9bd"/><stop offset="1" stop-color="#f2f2f2" stop-opacity="0"/></radialGradient></defs>
      <circle cx="21" cy="22" r="22" fill="url(#glowL)"/><circle cx="42" cy="20" r="20" fill="url(#glowR)"/><path fill="#c3a65c" opacity=".8" d="M16 30 26 13l10 2 12 15z"/>
      <path stroke="#fff5c8" stroke-width="1.300" d="M29 7v3M22 9l1 3M14 13l3 2M8 20l4 1M37 8l-2 3M47 8l-3 3M53 15l-4 1M54 22l-5-1M32 15l2 2M28 17v3M38 18l3-2M33 23v3M41 24l2-2"/>
      <path fill="#143a8a" d="M0 38Q7 30 16 26q5-2 9 1l12 11z"/><path fill="#f08a5a" d="m29 29 6 5 5-4z"/><path fill="#1c0d63" d="M6 38q14-6 30-5 8-7 12-5.500 7 2.500 13 10.500z"/>
    </svg>
  </label>
  <button aria-label="Task view" class="flex h-full w-12 items-center justify-center"><svg class="size-4" viewBox="0 0 16 16" fill="none" stroke="#fff" stroke-width="1.300"><path d="M1.500 1v2.500h9V1M1.500 5.500h9v5h-9zM1.500 15v-2.500h9V15M14 1v3M14 8v7"/><path d="M13 5h2v2h-2z" fill="#fff"/></svg></button>
  <button aria-label="File Explorer" class="ml-[7px] flex h-full w-10 items-center justify-center border-b-2 border-[#76b9ed]"><svg class="size-[22px]" viewBox="0 0 22 22"><path fill="#e0a010" d="M1 2h8l1.500 3H1z"/><path fill="#ffcf48" d="M1 5h20v15H1z"/><path fill="#3f9be0" d="M4.500 20v-7.500q0-1.500 1.500-1.500h10q1.500 0 1.500 1.500V20H14v-4H8v4z"/></svg></button>
  <button aria-label="Movies" class="ml-[9px] flex h-full w-10 items-center justify-center"><svg class="size-6" viewBox="0 0 24 24"><path fill="#3ccbf4" d="m1.500 5 20-4 .6 3.500L2 8.500z"/><path stroke="#0b5fb0" stroke-width="1.600" d="m6 3.500 2 4M11 2.500l2 4M16 1.500l2 4"/><path fill="#0c6fd0" d="M1.500 8H22v13q0 1.500-1.500 1.500H3Q1.500 22.500 1.500 21z"/><path fill="#fff" d="m9 10.500 8 4.700-8 4.800z"/></svg></button>
  <button aria-label="Notepad" class="ml-[8px] flex h-full w-10 items-center justify-center border-b-2 border-[#76b9ed]"><svg class="size-6" viewBox="0 0 24 24"><path fill="#d3d8da" d="m9 2 14 2-5 19-15-4z"/><path fill="#8fd0dc" d="m8 3 11 1.500-5 15.500L2 18z"/><path fill="#5fb0bf" d="m4.500 11 12 .5L14 20 2 18z"/><path stroke="#eee" stroke-dasharray="1.500 1" stroke-width="1.500" d="m8 2.500 14 2"/></svg></button>
  <button aria-label="Chrome" class="ml-[6px] flex h-full w-12 items-center justify-center border-r border-b-2 border-r-[#6b7176] border-b-[#76b9ed] bg-[#4b5257]"><svg class="h-7 w-[26px]" viewBox="0 0 26 28"><circle cx="12" cy="13" r="11" fill="#fbc02d"/><path fill="#e53935" d="M2.500 7.500A11 11 0 0 1 21.500 7.500H12L7.300 15.700z"/><path fill="#2e9d48" d="M2.500 7.500 7.300 15.700 12 18.400h4.700L12 24A11 11 0 0 1 2.500 7.500z"/><circle cx="12" cy="13" r="5.600" fill="#fff"/><circle cx="12" cy="13" r="4.400" fill="#3b7ded"/><circle cx="17.500" cy="18.500" r="7.500" fill="#512da8"/><text x="17.500" y="22" text-anchor="middle" font-family="Roboto" font-size="10" fill="#fff">R</text></svg></button>
  <div class="ml-auto flex h-full items-center">
    <button class="flex items-center text-[14px] whitespace-nowrap"><svg class="mr-[6px] h-6 w-[26px]" viewBox="0 0 26 24"><path fill="#a9c8f5" d="M6 21a5 5 0 0 1-.5-10A7.500 7.500 0 0 1 19 11.500 5 5 0 0 1 20 21z"/><path fill="#7fa8ea" d="M2 18.500Q4 15 12 16t12-1q0 6-5 6H6q-3.500 0-4-2.500z"/><circle cx="19" cy="6" r="6" fill="#d42a1e"/><text x="19" y="9.500" text-anchor="middle" font-family="Open Sans" font-size="9" font-weight="bold" fill="#fff">2</text></svg>31°C&nbsp; Cloudy</button>
    <button aria-label="Show hidden icons" class="ml-[21px]"><svg class="size-4" viewBox="0 0 16 16" fill="none" stroke="#fff" stroke-width="1.300"><path d="m2.500 11 5.500-5.500L13.500 11"/></svg></button>
    <button aria-label="Meet now" class="ml-2"><svg class="size-4" viewBox="0 0 16 16" fill="none" stroke="#fff" stroke-width="1.200"><path d="M3 4.500h7.500v7H3zM10.500 7.500 13 6v4.500L10.500 9M4 2.500Q7.500 0 11 2.500M4 13.500q3.500 2.500 7 0"/></svg></button>
    <button aria-label="Network" class="ml-2"><svg class="size-4" viewBox="0 0 16 16" fill="none" stroke="#fff" stroke-width="1.200"><path d="M5.500 3.500h10v7H3.500V7M8.500 10.500v4M5 14.500h7M.8 1.500h4v5h-4z"/></svg></button>
    <button aria-label="Volume" class="ml-2"><svg class="h-4 w-[18px]" viewBox="0 0 18 16" fill="none" stroke="#fff" stroke-width="1.200"><path d="M1 5.500h2.500L7 2v12l-3.500-3.500H1zM9.500 5.500q1.300 2.500 0 5M12 4q2.300 4 0 8M14.500 2.500q3.300 5.500 0 11"/></svg></button>
    <button class="ml-1 w-[62px] text-center text-[11px] leading-[18px] whitespace-nowrap">1:10 PM<br>8/12/2025</button>
    <button aria-label="Notifications" class="ml-3 flex h-full w-[42px] items-center"><svg class="h-7 w-[26px]" viewBox="0 0 26 28"><path fill="#fff" d="M1 4h16v12H9l-4 4v-4H1z"/><path stroke="#2b2b2b" stroke-width="1.200" d="M4 7.500h10M4 10.500h10M4 13.500h7"/><circle cx="16.500" cy="19" r="7.800" fill="#2f2e2c" stroke="#999"/><text x="16.500" y="22.800" text-anchor="middle" font-family="Open Sans" font-size="11" fill="#fff">1</text></svg></button>
  </div>
</footer>
<script>
  const field = document.getElementById('layout-name');
  field.focus();
  field.select();
</script>
</body>
</html>
